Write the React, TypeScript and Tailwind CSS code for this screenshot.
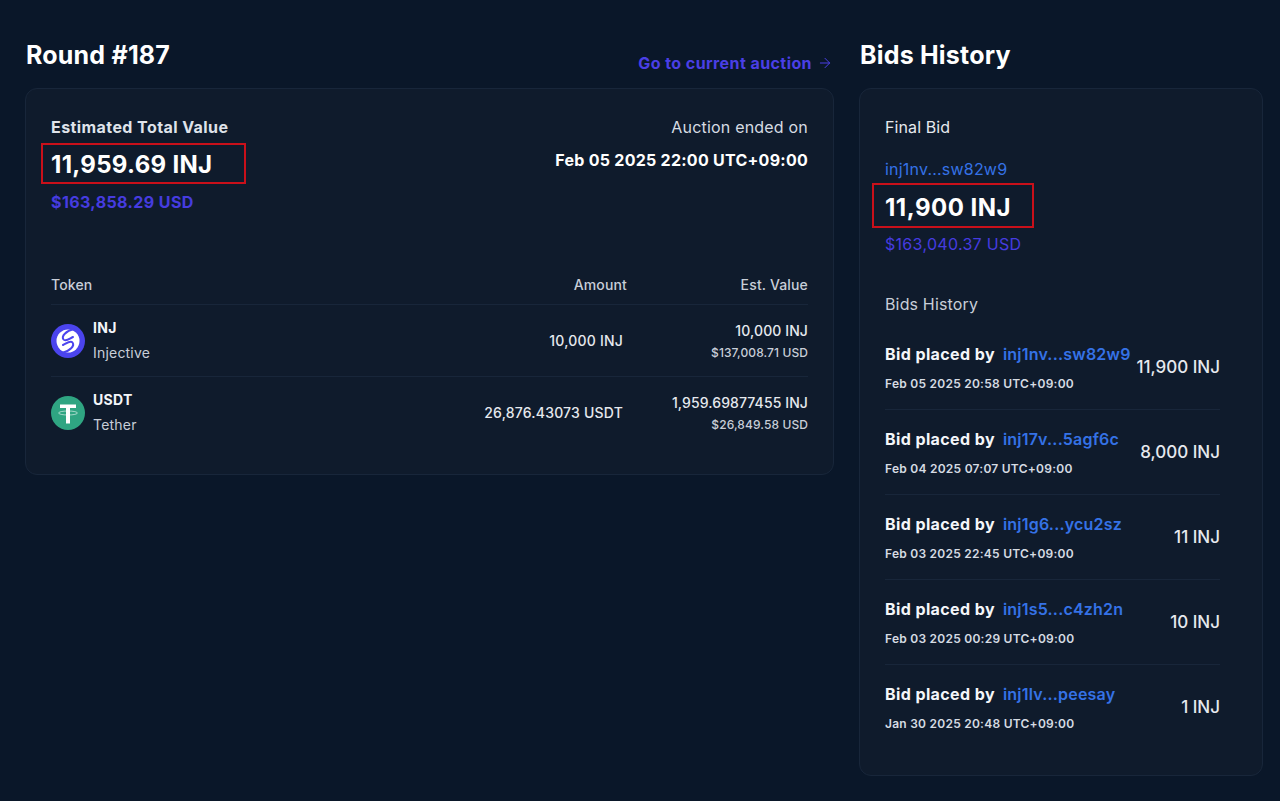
import { ArrowRight } from "lucide-react";

const bids = [
  { addr: "inj1nv...sw82w9", date: "Feb 05 2025 20:58 UTC+09:00", amount: "11,900 INJ" },
  { addr: "inj17v...5agf6c", date: "Feb 04 2025 07:07 UTC+09:00", amount: "8,000 INJ" },
  { addr: "inj1g6...ycu2sz", date: "Feb 03 2025 22:45 UTC+09:00", amount: "11 INJ" },
  { addr: "inj1s5...c4zh2n", date: "Feb 03 2025 00:29 UTC+09:00", amount: "10 INJ" },
  { addr: "inj1lv...peesay", date: "Jan 30 2025 20:48 UTC+09:00", amount: "1 INJ" },
];

function InjIcon() {
  return (
    <svg width="34" height="34" viewBox="0 0 34 34" className="shrink-0">
      <circle cx="17" cy="17" r="17" fill="#4b44ee" />
      <circle cx="17" cy="17" r="11.500" fill="#fff" />
      <g fill="none" stroke="#4b44ee" strokeLinecap="round" strokeWidth="2">
        <path d="M23 5C15 7 10 12 12.500 15.500C14.500 18 18 15 22 13" />
        <path d="M11 29C19 27 24 22 21.500 18.500C19.500 16 16 19 12 21" />
      </g>
    </svg>
  );
}

function UsdtIcon() {
  return (
    <svg width="34" height="34" viewBox="0 0 34 34" className="shrink-0">
      <circle cx="17" cy="17" r="17" fill="#2fa582" />
      <ellipse cx="17" cy="17" rx="9.500" ry="2" fill="none" stroke="#fff" strokeWidth="0.700" opacity="0.8" />
      <path d="M9 8.500h16v3.600h-6v15.400h-4V12.100H9z" fill="#fff" />
    </svg>
  );
}

function TokenRow({
  icon,
  symbol,
  name,
  amount,
  value,
  usd,
}: {
  icon: React.ReactNode;
  symbol: string;
  name: string;
  amount: string;
  value: string;
  usd: string;
}) {
  return (
    <div className="flex items-center h-[72px] border-t border-[#18263a]">
      <div className="flex items-center gap-2 w-[300px]">
        {icon}
        <div>
          <div className="text-[14px] leading-[20px] tracking-[0.3px] font-bold text-[#f4f6f9]">{symbol}</div>
          <div className="text-[14px] leading-[20px] mt-[5px] tracking-[0.2px] text-[#c8ced8]">{name}</div>
        </div>
      </div>
      <div className="w-[272px] text-right text-[14px] tracking-[0.2px] font-medium text-[#e6e9ee]">{amount}</div>
      <div className="flex-1 text-right">
        <div className="text-[14px] leading-[20px] tracking-[0.1px] font-medium text-[#e6e9ee]">{value}</div>
        <div className="text-[12px] leading-[16px] mt-[4px] tracking-[0.1px] font-medium text-[#c8ced8]">{usd}</div>
      </div>
    </div>
  );
}

export default function App() {
  return (
    <div className="relative min-h-[801px] bg-[#0a1729] font-['Inter',sans-serif] text-white overflow-hidden">
      <div className="flex gap-[25px] pl-[25px] pr-[17px] pt-[39px]">
        {/* LEFT */}
        <div className="w-[809px]">
          <div className="flex items-start justify-between h-[49px]">
            <h1 className="text-[25px] leading-[32px] pl-[1px] tracking-[0.2px] font-bold text-white">Round #187</h1>
            <a className="flex items-center gap-[5px] text-[16px] leading-[24px] mt-[12px] tracking-[0.42px] font-bold text-[#4a3fe6] pr-[1px]">
              Go to current auction
              <ArrowRight size={16} strokeWidth={1.5} />
            </a>
          </div>
          <div className="rounded-xl border border-[#18263a] bg-[#0f1b2c] h-[387px] px-[25px] pt-[26px]">
            <div className="flex justify-between">
              <div>
                <div className="text-[16px] leading-[24px] tracking-[0.42px] font-bold text-[#dfe3ea]">Estimated Total Value</div>
                <div className="text-[24px] leading-[32px] mt-[10px] tracking-[0.3px] font-bold text-white">11,959.69 INJ</div>
                <div className="text-[16px] leading-[24px] mt-[9px] tracking-[0.4px] font-bold text-[#463ce0]">$163,858.29 USD</div>
              </div>
              <div className="text-right">
                <div className="text-[16px] leading-[24px] tracking-[0.2px] text-[#d6dbe3]">Auction ended on</div>
                <div className="text-[16px] leading-[24px] mt-[9px] tracking-[0.26px] font-bold text-white">Feb 05 2025 22:00 UTC+09:00</div>
              </div>
            </div>
            <div className="flex items-center h-[32px] mt-[54px] text-[14px] tracking-[0.15px] font-medium text-[#c8ced8]">
              <div className="w-[300px]">Token</div>
              <div className="w-[276px] text-right">Amount</div>
              <div className="flex-1 text-right">Est. Value</div>
            </div>
            <div className="mt-[4px]">
              <TokenRow icon={<InjIcon />} symbol="INJ" name="Injective" amount="10,000 INJ" value="10,000 INJ" usd="$137,008.71 USD" />
              <TokenRow icon={<UsdtIcon />} symbol="USDT" name="Tether" amount="26,876.43073 USDT" value="1,959.69877455 INJ" usd="$26,849.58 USD" />
            </div>
          </div>
        </div>

        {/* RIGHT */}
        <div className="w-[404px]">
          <h2 className="h-[49px] text-[25px] leading-[32px] pl-[1px] tracking-[0.2px] font-bold text-white">Bids History</h2>
          <div className="rounded-xl border border-[#18263a] bg-[#0f1b2c] h-[688px] pl-[25px] pr-[42px] pt-[26px]">
            <div className="text-[16px] leading-[24px] tracking-[0.1px] text-[#e6e9ee]">Final Bid</div>
            <div className="text-[16px] leading-[24px] mt-[18px] tracking-[0.2px] text-[#3572e6]">inj1nv...sw82w9</div>
            <div className="text-[24px] leading-[32px] mt-[11px] tracking-[0.5px] font-bold text-white">11,900 INJ</div>
            <div className="text-[16px] leading-[24px] mt-[8px] tracking-[0.3px] text-[#463ce0]">$163,040.37 USD</div>
            <div className="text-[16px] leading-[24px] mt-[36px] tracking-[0.15px] text-[#c8ced8]">Bids History</div>
            <div className="mt-[8px]">
              {bids.map((bid, index) => (
                <div key={bid.addr} className={`flex items-center justify-between h-[85px] border-t ${index > 0 ? "border-[#18263a]" : "border-transparent"}`}>
                  <div>
                    <div className="flex gap-[8px] text-[16px] leading-[24px] tracking-[0.4px] font-bold">
                      <span className="text-[#f4f6f9]">Bid placed by</span>
                      <span className="font-semibold tracking-[0.2px] text-[#3572e6]">{bid.addr}</span>
                    </div>
                    <div className="text-[12px] leading-[16px] mt-[10px] tracking-[0.25px] font-semibold text-[#d6dbe3]">{bid.date}</div>
                  </div>
                  <div className="text-[17px] leading-[24px] font-medium text-[#e6e9ee]">{bid.amount}</div>
                </div>
              ))}
            </div>
          </div>
        </div>
      </div>

      {/* red annotation boxes */}
      <div className="absolute left-[41px] top-[143px] w-[205px] h-[41px] border-2 border-[#c9101a]" />
      <div className="absolute left-[872px] top-[183px] w-[162px] h-[45px] border-2 border-[#c9101a]" />
    </div>
  );
}
